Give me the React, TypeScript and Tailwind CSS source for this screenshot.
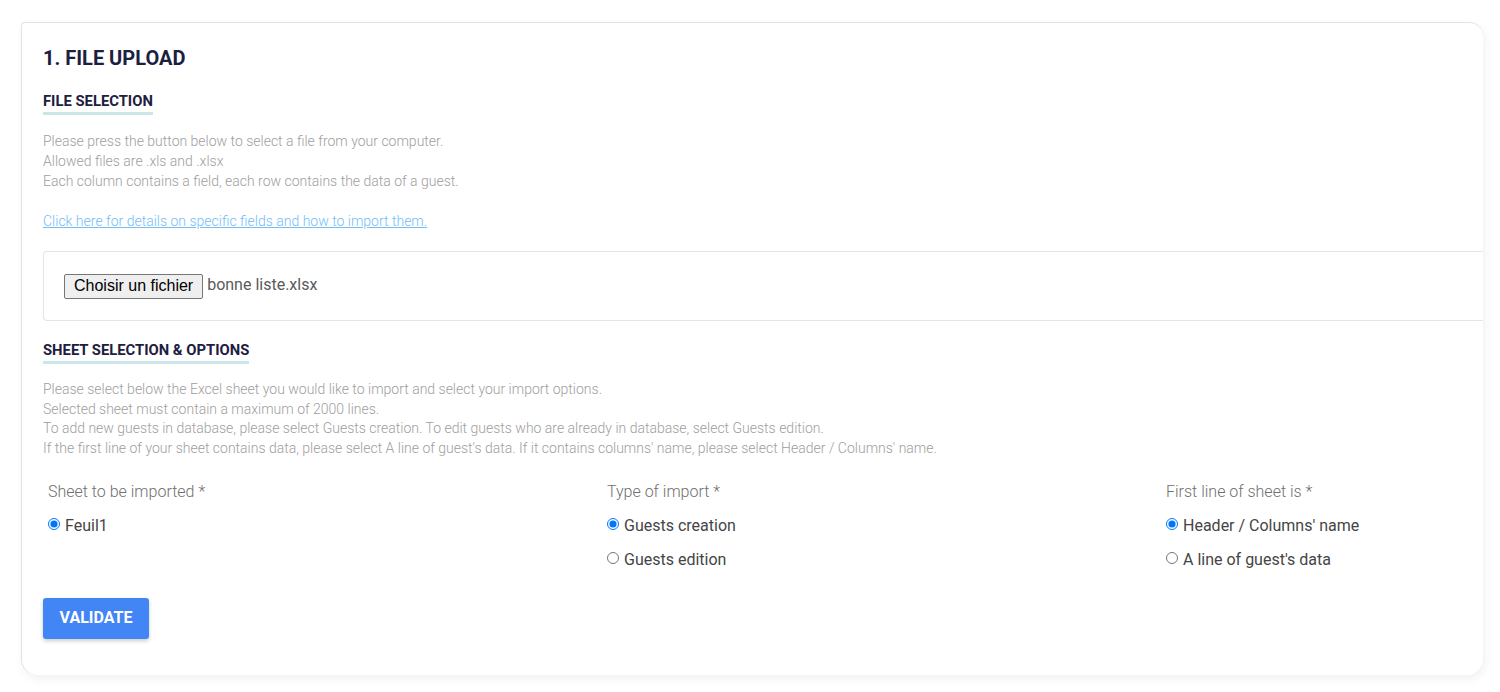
import React from "react";

const font = { fontFamily: "Roboto, 'Noto Sans', sans-serif" };

function SectionTitle({ children }: { children: React.ReactNode }) {
  return (
    <div className="inline-block">
      <h3 className="text-[14.8px] font-bold leading-[18px] text-[#1c2040] uppercase">{children}</h3>
      <div className="mt-[2px] h-[3px] bg-[#cbe6e8]" />
    </div>
  );
}

function Radio({ label, checked, name }: { label: string; checked?: boolean; name: string }) {
  return (
    <label className="flex items-center h-[20px] text-[16px] text-[#454545]">
      <input
        type="radio"
        name={name}
        defaultChecked={checked}
        className="m-0 mr-[5px] w-[12px] h-[12px] -translate-y-[2px] accent-[#0075ff]"
      />
      {label}
    </label>
  );
}

const columns = [
  { label: "Sheet to be imported *", name: "sheet", options: ["Feuil1"] },
  { label: "Type of import *", name: "type", options: ["Guests creation", "Guests edition"] },
  { label: "First line of sheet is *", name: "first", options: ["Header / Columns' name", "A line of guest's data"] },
];

export default function App() {
  return (
    <div className="min-h-[692px] bg-white pt-[22px] pl-[21px] pr-[17px]" style={font}>
      <div className="overflow-hidden rounded-tl-[4px] rounded-tr-[14px] rounded-b-[16px] border-t border-l border-[#e2e2ea] bg-white shadow-[2px_4px_10px_rgba(0,0,0,0.06)] pl-[21px] pt-[23px] h-[653px]">
        <h2 className="text-[20px] font-bold leading-[24px] text-[#1c2040]">1. FILE UPLOAD</h2>

        <div className="mt-[19px]">
          <SectionTitle>File selection</SectionTitle>
        </div>

        <div className="mt-[16px] text-[14px] font-light leading-[20px] text-[#9e9e9e]">
          <p>Please press the button below to select a file from your computer.</p>
          <p>Allowed files are .xls and .xlsx</p>
          <p>Each column contains a field, each row contains the data of a guest.</p>
          <p className="mt-[20px]">
            <a href="#" className="text-[#74bdf7] underline">
              Click here for details on specific fields and how to import them.
            </a>
          </p>
        </div>

        <div className="mt-[20px] h-[70px] rounded-l-[4px] border-y border-l border-[#e4e4e4] flex items-center pl-[20px]">
          <button
            className="h-[25px] px-[9px] border border-[#767676] rounded-[2px] bg-[#efefef] text-[16px] text-black leading-none"
            style={{ fontFamily: "'Liberation Sans', Arial, sans-serif" }}
          >
            Choisir un fichier
          </button>
          <span className="ml-[4px] text-[16px] text-[#5a5a5a] -translate-y-[1px]">bonne liste.xlsx</span>
        </div>

        <div className="mt-[17px]">
          <SectionTitle>Sheet selection &amp; options</SectionTitle>
        </div>

        <div className="mt-[16px] text-[14px] font-light leading-[19.7px] text-[#9e9e9e] whitespace-nowrap">
          <p>Please select below the Excel sheet you would like to import and select your import options.</p>
          <p>Selected sheet must contain a maximum of 2000 lines.</p>
          <p>To add new guests in database, please select Guests creation. To edit guests who are already in database, select Guests edition.</p>
          <p>If the first line of your sheet contains data, please select A line of guest's data. If it contains columns' name, please select Header / Columns' name.</p>
        </div>

        <div className="mt-[23px] flex h-[92px]">
          {columns.map((c) => (
            <div key={c.name} className="w-[559px] shrink-0 pl-[5px]">
              <div className="text-[16px] font-light leading-[20px] text-[#6f6f6f]">{c.label}</div>
              <div className="mt-[14px] flex flex-col gap-[14px]">
                {c.options.map((o, i) => (
                  <Radio key={o} name={c.name} label={o} checked={i === 0} />
                ))}
              </div>
            </div>
          ))}
        </div>

        <button className="mt-[24px] h-[41px] w-[106px] rounded-[3px] bg-[#4285f4] text-[16px] font-bold text-white shadow-[0_2px_4px_rgba(0,0,0,0.2)]">
          VALIDATE
        </button>
      </div>
    </div>
  );
}
